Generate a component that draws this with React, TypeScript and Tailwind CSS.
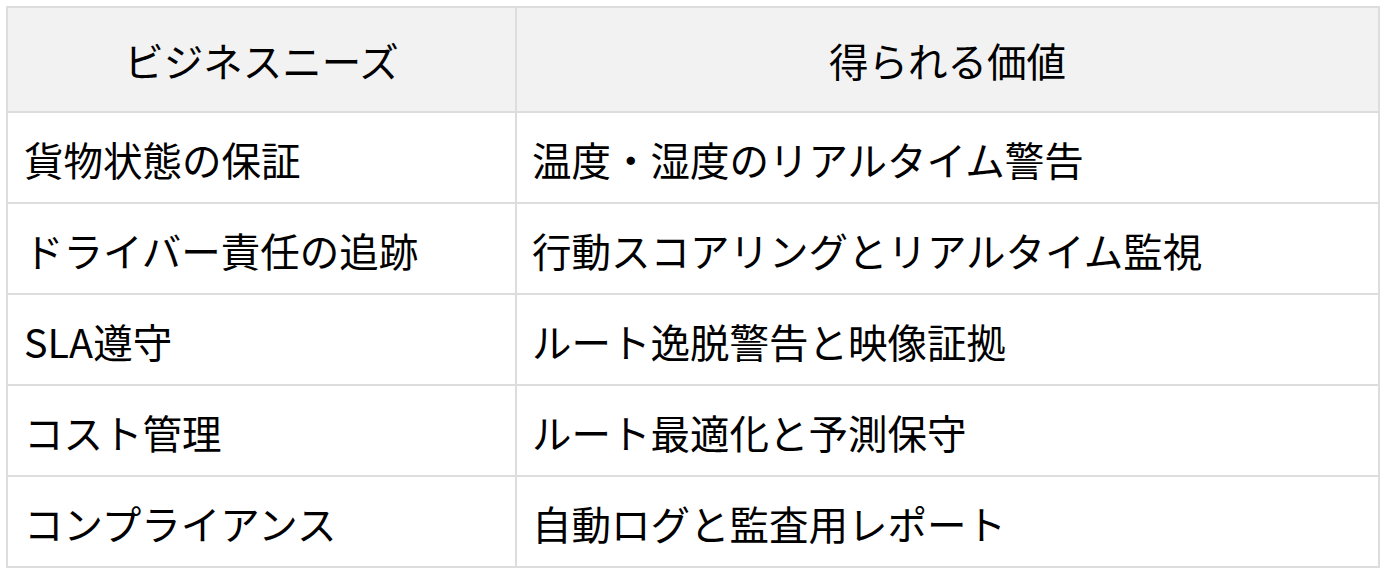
const rows: [string, string][] = [
  ["貨物状態の保証", "温度・湿度のリアルタイム警告"],
  ["ドライバー責任の追跡", "行動スコアリングとリアルタイム監視"],
  ["SLA遵守", "ルート逸脱警告と映像証拠"],
  ["コスト管理", "ルート最適化と予測保守"],
  ["コンプライアンス", "自動ログと監査用レポート"],
];

export default function App() {
  return (
    <div className="min-h-screen bg-white pl-[6px] pt-[6px] text-black [font-family:'Noto_Sans_CJK_JP','Noto_Sans',sans-serif]">
      <div className="grid w-[1374px] grid-cols-[509px_863px] border-l-2 border-t-2 border-[#dddddd] text-[39.5px] leading-none">
        <div className="flex h-[105px] items-center justify-center border-b-2 border-r-2 border-[#dddddd] bg-[#f2f2f2]">
          ビジネスニーズ
        </div>
        <div className="flex h-[105px] items-center justify-center border-b-2 border-r-2 border-[#dddddd] bg-[#f2f2f2]">
          得られる価値
        </div>
        {rows.map(([need, value]) => (
          <div key={need} className="contents">
            <div className="flex h-[91px] items-center border-b-2 border-r-2 border-[#dddddd] px-[16px] pt-[2px]">
              {need}
            </div>
            <div className="flex h-[91px] items-center border-b-2 border-r-2 border-[#dddddd] px-[15px] pt-[2px]">
              {value}
            </div>
          </div>
        ))}
      </div>
    </div>
  );
}
